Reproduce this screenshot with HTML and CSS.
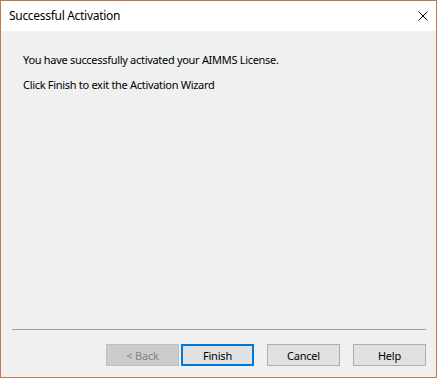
FILE: index.html
```html
<!DOCTYPE html>
<html>
<head>
    <meta charset="UTF-8">
    <title>Successful Activation</title>
    <link rel="stylesheet" href="styles.css">
</head>
<body>
    <div class="window">
        <div class="titlebar">
            <div class="title">Successful Activation</div>
            <div class="close">
                <svg width="10" height="10" viewBox="0 0 10 10">
                    <path d="M0.5 0.5 L9.5 9.5 M9.5 0.5 L0.5 9.5" stroke="#000" stroke-width="1" fill="none"/>
                </svg>
            </div>
        </div>
        <div class="content">
            <div class="message">
                <p>You have successfully activated your AIMMS License.</p>
                <p>Click Finish to exit the Activation Wizard</p>
            </div>
            <div class="separator"></div>
            <div class="buttons">
                <div class="nav-group">
                    <button class="btn disabled">&lt; Back</button>
                    <button class="btn default">Finish</button>
                </div>
                <button class="btn">Cancel</button>
                <button class="btn">Help</button>
            </div>
        </div>
    </div>
</body>
</html>
```

FILE: styles.css
```css
body {
    margin: 0;
    padding: 0;
    background-color: #f0f0f0;
    font-family: 'Noto Sans', 'Open Sans', sans-serif;
    font-size: 11px;
    color: #000;
}

.window {
    width: 437px;
    height: 378px;
    box-sizing: border-box;
    border: 1px solid #c0784a;
    display: flex;
    flex-direction: column;
    background-color: #f0f0f0;
}

.titlebar {
    height: 30px;
    background-color: #fff;
    display: flex;
    align-items: center;
    justify-content: space-between;
    padding: 0 8px 0 8px;
    flex-shrink: 0;
}

.title {
    font-size: 12px;
    letter-spacing: -0.3px;
    padding-bottom: 1px;
}

.close {
    width: 10px;
    height: 10px;
    display: flex;
}

.content {
    flex: 1;
    display: flex;
    flex-direction: column;
    padding: 0 10px 0 11px;
}

.message {
    flex: 1;
    padding-left: 11px;
    padding-top: 21px;
}

.message p {
    margin: 0 0 9px;
    line-height: 16px;
    font-size: 11px;
    letter-spacing: -0.3px;
}

.separator {
    height: 1px;
    background-color: #a0a0a0;
    margin: 0 0 14px 0;
}

.buttons {
    display: flex;
    justify-content: flex-end;
    gap: 13px;
    margin-bottom: 11px;
}

.nav-group {
    display: flex;
    gap: 2px;
}

.btn {
    width: 73px;
    height: 22px;
    box-sizing: border-box;
    border: 1px solid #adadad;
    background-color: #e1e1e1;
    font-family: inherit;
    font-size: 11px;
    letter-spacing: -0.2px;
    color: #000;
    padding: 0;
}

.btn.disabled {
    background-color: #cccccc;
    border-color: #bfbfbf;
    color: #838383;
}

.btn.default {
    border: 2px solid #0078d7;
}
```
